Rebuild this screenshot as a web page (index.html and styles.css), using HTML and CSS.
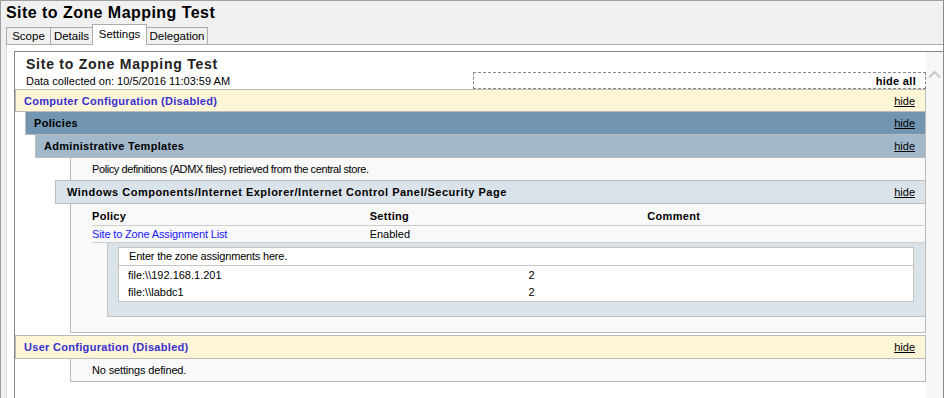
FILE: index.html
```html
<!DOCTYPE html>
<html lang="en">
<head>
    <meta charset="UTF-8">
    <meta name="viewport" content="width=device-width, initial-scale=1.0">
    <title>Site to Zone Mapping Test</title>
    <link rel="stylesheet" href="styles.css">
</head>
<body>

    <div id="gpo-window">
        <div class="window-title">Site to Zone Mapping Test</div>

        <div class="tabs">
            <div class="tab tab-scope">Scope</div>
            <div class="tab tab-details">Details</div>
            <div class="tab tab-settings active">Settings</div>
            <div class="tab tab-delegation">Delegation</div>
        </div>

        <div class="tab-panel">
            <div class="browser">
                <div class="report">
                    <div class="report-title">Site to Zone Mapping Test</div>
                    <div class="report-meta">
                        <span class="collected">Data collected on: 10/5/2016 11:03:59 AM</span>
                        <div class="hide-all">hide all</div>
                    </div>

                    <div class="he he0 first"><span>Computer Configuration (Disabled)</span><a class="hide">hide</a></div>
                    <div class="he he1"><span>Policies</span><a class="hide">hide</a></div>
                    <div class="he he2"><span>Administrative Templates</span><a class="hide">hide</a></div>
                    <div class="info note">Policy definitions (ADMX files) retrieved from the central store.</div>
                    <div class="he he3"><span>Windows Components/Internet Explorer/Internet Control Panel/Security Page</span><a class="hide">hide</a></div>

                    <div class="settings">
                        <div class="settings-table">
                            <div class="row head">
                                <span>Policy</span>
                                <span>Setting</span>
                                <span>Comment</span>
                            </div>
                            <div class="row">
                                <a class="policy-link">Site to Zone Assignment List</a>
                                <span>Enabled</span>
                                <span></span>
                            </div>
                        </div>
                        <div class="list-box">
                            <div class="list">
                                <div class="list-caption">Enter the zone assignments here.</div>
                                <div class="list-row first-row"><span>file:\\192.168.1.201</span><span>2</span></div>
                                <div class="list-row"><span>file:\\labdc1</span><span>2</span></div>
                            </div>
                        </div>
                    </div>

                    <div class="he he0 user"><span>User Configuration (Disabled)</span><a class="hide">hide</a></div>
                    <div class="info">No settings defined.</div>
                </div>

                <div class="scrollbar">
                    <svg width="17" height="12" viewBox="0 0 17 12">
                        <polyline points="3,8.5 8.5,3 14,8.5" fill="none" stroke="#c8c8c8" stroke-width="2"/>
                    </svg>
                </div>
            </div>
        </div>
    </div>

</body>
</html>
```

FILE: styles.css
```css
body {
    margin: 0;
    padding: 0;
    width: 944px;
    height: 398px;
    overflow: hidden;
    background-color: #f0f0f0;
    font-family: 'Liberation Sans', Arial, sans-serif;
    font-size: 11px;
    color: #000;
}

#gpo-window {
    height: 398px;
    box-sizing: border-box;
    border-top: 1px solid #a0a0a0;
    border-left: 1px solid #a0a0a0;
    border-right: 1px solid #8a8a8a;
    display: flex;
    flex-direction: column;
}

.window-title {
    padding: 2px 0 0 5px;
    height: 23px;
    box-sizing: border-box;
    line-height: 20px;
    font-size: 16px;
    font-weight: bold;
    letter-spacing: 0.45px;
}

/* tab strip */
.tabs {
    display: flex;
    align-items: flex-end;
    height: 20px;
    padding-left: 5px;
}

.tab {
    height: 17px;
    box-sizing: border-box;
    border: 1px solid #acacac;
    border-bottom: none;
    margin-left: -1px;
    line-height: 16px;
    text-align: center;
    font-size: 11.5px;
    background-color: #f0f0f0;
}

.tab-scope {
    width: 45px;
    margin-left: 0;
}

.tab-details {
    width: 43px;
}

.tab-settings {
    width: 55px;
}

.tab-delegation {
    width: 62px;
}

.tab.active {
    height: 21px;
    margin-bottom: -1px;
    line-height: 18px;
    background-color: #fff;
    position: relative;
    z-index: 1;
}

.tab-panel {
    flex: 1;
    display: flex;
    margin-left: 5px;
    padding: 6px 0 0 7px;
    background-color: #fff;
    border-top: 1px solid #acacac;
    border-left: 1px solid #d9d9d9;
    min-height: 0;
}

.browser {
    flex: 1;
    display: flex;
    border-top: 1px solid #828790;
    border-left: 1px solid #828790;
    overflow: hidden;
}

.report {
    flex: 1;
    padding-top: 4px;
    background-color: #fff;
}

.scrollbar {
    width: 17px;
    background-color: #f7f7f7;
    padding-top: 17px;
}

.scrollbar svg {
    display: block;
}

/* report */
.report-title {
    padding-left: 11px;
    font-size: 14px;
    line-height: 16px;
    font-weight: bold;
    letter-spacing: 0.75px;
    color: #222;
}

.report-meta {
    display: flex;
    justify-content: space-between;
    align-items: flex-end;
}

.collected {
    padding: 0 0 1px 11px;
    line-height: 13px;
}

.hide-all {
    width: 453px;
    box-sizing: border-box;
    border: 1px dashed #8a8a8a;
    padding: 2px 9px 0 0;
    line-height: 13px;
    text-align: right;
    font-weight: bold;
    letter-spacing: 0.3px;
}

.he {
    display: flex;
    justify-content: space-between;
    height: 24px;
    box-sizing: border-box;
    margin-top: -1px;
    padding: 0 10px 0 8px;
    border: 1px solid #bbb;
    line-height: 22px;
    font-weight: bold;
    letter-spacing: 0.3px;
}

.hide {
    font-weight: normal;
    letter-spacing: 0;
    text-decoration: underline;
    color: #000;
}

.he0 {
    background-color: #fdf6d6;
    color: #3a2fcf;
}

.he0.first {
    height: 23px;
    margin-top: 0;
}

.he0.user {
    margin-top: 2px;
}

.he1 {
    margin-left: 10px;
    background-color: #7296b1;
}

.he2 {
    margin-left: 20px;
    background-color: #a2b9cc;
}

.he3 {
    margin-left: 40px;
    padding-left: 11px;
    letter-spacing: 0.5px;
    background-color: #dae3ea;
}

.info {
    margin: -1px 0 0 55px;
    height: 24px;
    box-sizing: border-box;
    padding-left: 21px;
    border: 1px solid #bbb;
    line-height: 22px;
    letter-spacing: -0.15px;
    background-color: #f9f9f9;
}

.info.note {
    letter-spacing: -0.4px;
}

.settings {
    margin: -1px 0 0 55px;
    padding-bottom: 15px;
    border: 1px solid #bbb;
    background-color: #f9f9f9;
}

.settings-table {
    margin-left: 21px;
}

.row {
    display: grid;
    grid-template-columns: 1fr 1fr 1fr;
    line-height: 16px;
    border-bottom: 1px solid #cfcfcf;
}

.row.head {
    padding-top: 3px;
    line-height: 18px;
    font-weight: bold;
    letter-spacing: 0.3px;
}

.policy-link {
    color: #1515ff;
    letter-spacing: -0.15px;
}

.list-box {
    margin-left: 36px;
    padding: 4px 11px 14px 10px;
    border-left: 1px solid #c4c4c4;
    border-bottom: 1px solid #c4c4c4;
    background-color: #dae3ea;
}

.list {
    background-color: #fff;
    border: 1px solid #c4c4c4;
}

.list-caption {
    padding-left: 10px;
    line-height: 17px;
    letter-spacing: -0.2px;
    border-bottom: 1px solid #c4c4c4;
}

.list-row {
    display: grid;
    grid-template-columns: 1fr 1fr;
    padding-left: 9px;
    line-height: 17px;
}

.list-row span:last-child {
    padding-left: 8px;
}

.list-row.first-row {
    line-height: 18px;
}
```
